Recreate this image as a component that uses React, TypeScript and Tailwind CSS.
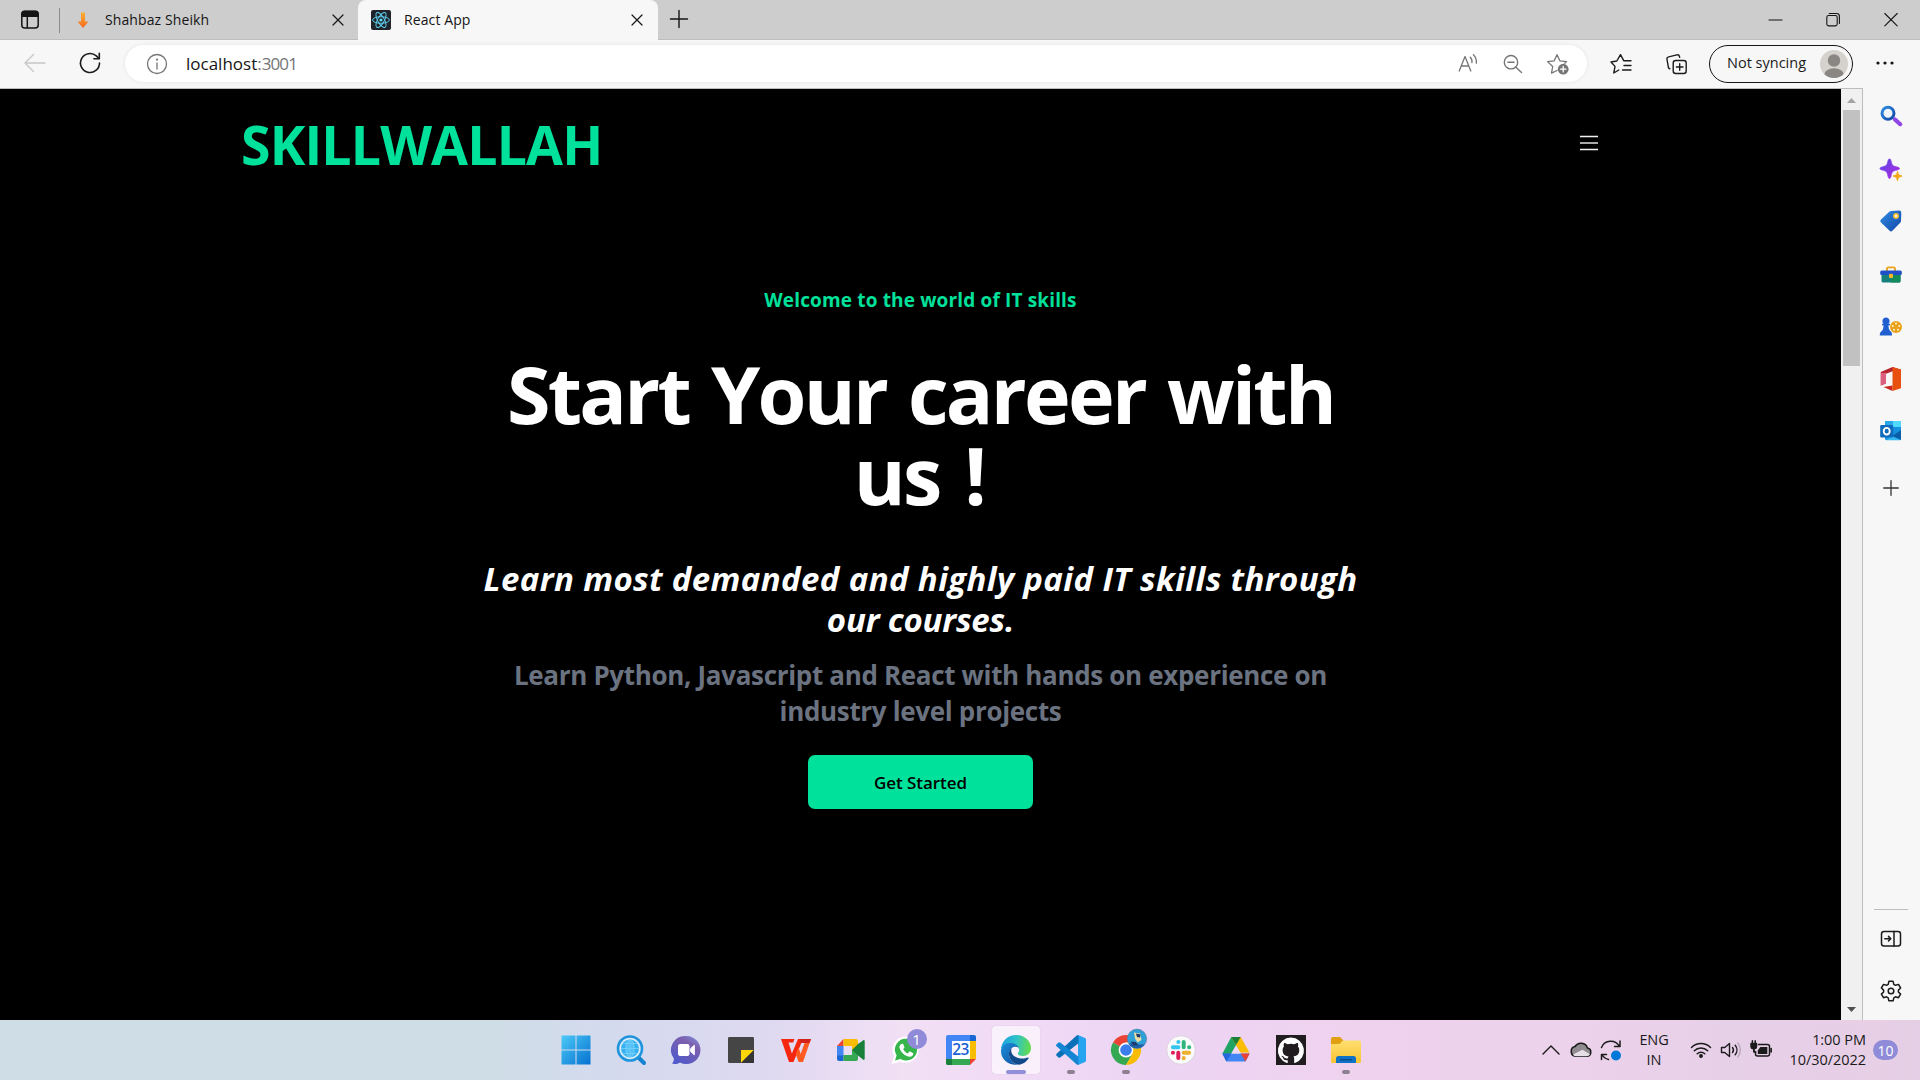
import React from "react";

type Kids = { children: React.ReactNode };

/* 24px line icon on a 24 unit grid */
const Line = ({ children, className = "", w = 1.3 }: Kids & { className?: string; w?: number }) => (
  <svg viewBox="0 0 24 24" className={`size-6 shrink-0 ${className}`} fill="none" stroke="currentColor" strokeWidth={w} strokeLinecap="round" strokeLinejoin="round">
    {children}
  </svg>
);

/* 30px colour icon on a 30 unit grid */
const Art = ({ children }: Kids) => (
  <svg viewBox="0 0 30 30" className="size-[30px] shrink-0 overflow-visible">
    {children}
  </svg>
);

const CloseX = ({ className = "" }: { className?: string }) => (
  <Line className={className} w={1.2}>
    <path d="M7 7l10 10M17 7L7 17" />
  </Line>
);

function TabBar() {
  return (
    <div className="flex h-10 shrink-0 border-b border-[#bdbdbd] bg-[#cdcdcd] text-[14px] text-[#151515]">
      <div className="flex w-[59px] items-center border-0 pl-[18px]">
        <Line w={1.5}>
          <rect x="3.8" y="3.6" width="16.4" height="16.4" rx="3" />
          <path d="M4 5.5a2.4 2.4 0 0 1 2.4-2.2h11.2A2.4 2.4 0 0 1 20 5.5v2.7H4z" fill="currentColor" />
          <path d="M9.3 8v11.8" />
        </Line>
      </div>
      <div className="mt-2 h-[25px] w-px bg-[#8b8b8b]" />
      <div className="flex h-10 w-[298px] items-center">
        <svg viewBox="0 0 14 20" className="ml-4 h-5 w-[14px]">
          <defs>
            <linearGradient id="arr" x1="0" y1="0" x2="0" y2="1">
              <stop offset="0" stopColor="#fbb034" />
              <stop offset="1" stopColor="#f26a1b" />
            </linearGradient>
          </defs>
          <path d="M5 2.500h4v9h3.500L7 18 1.500 11.500H5z" fill="url(#arr)" />
        </svg>
        <span className="ml-[15px] pb-[2px] tracking-[0.100px]">Shahbaz Sheikh</span>
        <CloseX className="mr-2 ml-auto" />
      </div>
      <div className="flex h-10 w-[300px] items-center rounded-t-[8px] bg-[#f7f7f7]">
        <svg viewBox="0 0 20 20" className="ml-[13px] size-5">
          <rect width="20" height="20" rx="2" fill="#20232a" />
          <g fill="none" stroke="#61dafb" strokeWidth="0.9">
            <ellipse cx="10" cy="10" rx="8.400" ry="3.300" />
            <ellipse cx="10" cy="10" rx="8.400" ry="3.300" transform="rotate(60 10 10)" />
            <ellipse cx="10" cy="10" rx="8.400" ry="3.300" transform="rotate(120 10 10)" />
          </g>
          <circle cx="10" cy="10" r="1.600" fill="#61dafb" />
        </svg>
        <span className="ml-[13px] pb-[2px] tracking-[0.1px]">React App</span>
        <CloseX className="mr-[9px] ml-auto" />
      </div>
      <Line className="mt-[7px] ml-[9px]" w={1.4}>
        <path d="M3.500 12h17M12 3.500v17" />
      </Line>
      <div className="ml-auto flex items-center gap-[34px] pr-[17px]">
        <Line w={1.1}>
          <path d="M6 12h13" />
        </Line>
        <Line w={1.1}>
          <rect x="5.800" y="7.500" width="10.400" height="10.400" rx="1.800" />
          <path d="M8.200 5.500h7.600a2.600 2.600 0 0 1 2.600 2.600v7.400" />
        </Line>
        <Line w={1.1}>
          <path d="M5.800 5.500l12.400 12.400M18.200 5.500L5.800 17.900" />
        </Line>
      </div>
    </div>
  );
}

function Toolbar() {
  return (
    <div className="flex h-12 shrink-0 items-center bg-[#f7f7f7] pb-[2px] text-[#1b1b1b]">
      <Line className="ml-[23px] text-[#c6c6c6]">
        <path d="M22 12H2.500M10.500 3.500L2 12l8.500 8.500" />
      </Line>
      <Line className="ml-[31px]" w={1.6}>
        <path d="M21.500 12a9.500 9.500 0 1 1-3.200-7.100L21 7.500" />
        <path d="M21.300 2.300v5.400h-5.400" />
      </Line>
      <div className="mt-px ml-[23px] flex h-[37px] w-[1462px] items-center rounded-full bg-white text-[#757575] shadow-[0_0_4px_rgba(0,0,0,0.08)]">
        <Line className="ml-[20px]">
          <circle cx="12" cy="12" r="9.500" />
          <path d="M12 11v6" />
          <circle cx="12" cy="7.600" r="0.500" fill="currentColor" />
        </Line>
        <span className="ml-[17px] text-[17px]">
          <span className="text-[#151515]">localhost</span>:<span className="tracking-[-0.900px]">3001</span>
        </span>
        <Line className="ml-auto">
          <path d="M3.200 19L9 4.500 14.800 19M5.200 14h7.600" />
          <path d="M14.200 5.200a6 6 0 0 1 1.700 5.500M17.400 2.700a10 10 0 0 1 2.900 8.500" />
        </Line>
        <Line className="ml-[21px]" w={1.4}>
          <circle cx="10" cy="10.200" r="6.700" />
          <path d="M15 15.200l5.500 5.300M6.900 10.200h6.200" />
        </Line>
        <Line className="mr-[17px] ml-[21px]" w={1.3}>
          <path d="M11 18.500l-5.500 2.600 1.200-6.600L1.500 9.600l6.700-.8L11 2.700l2.900 6.100 6.600.8-1.700 1.700" />
          <circle cx="17.200" cy="17.200" r="5.400" fill="currentColor" stroke="none" />
          <path d="M17.200 14.500v5.400M14.500 17.200h5.400" stroke="white" />
        </Line>
      </div>
      <Line className="mt-px ml-[22px]" w={1.4}>
        <path d="M9.800 18l-5 3 1.200-6.600L2 10l5.800-1 3.700-6.300 3.200 6h7.300M15 13.500h7M13.500 18h8.500" />
      </Line>
      <Line className="mt-px ml-[32px]" w={1.4}>
        <rect x="8.200" y="8.500" width="13" height="13" rx="2.500" />
        <path d="M14.700 11.700v6.600M11.400 15h6.600M4.800 16.800L3.500 15.900 2 7.500a2.200 2.200 0 0 1 1.700-2.600l8.200-2a2.200 2.200 0 0 1 2.600 1.700l.2.800" />
      </Line>
      <div className="mt-px ml-[20px] flex h-[38px] w-[144px] items-center justify-between rounded-full border-[1.5px] border-[#151515] pr-1 pl-[17px] text-[14.500px]">
        <span className="pb-px">Not syncing</span>
        <svg viewBox="0 0 28 28" className="size-7">
          <defs>
            <clipPath id="av">
              <circle cx="14" cy="14" r="14" />
            </clipPath>
          </defs>
          <g clipPath="url(#av)">
            <rect width="28" height="28" fill="#d5d2ce" />
            <circle cx="14" cy="10.500" r="6.200" fill="#8a8683" />
            <ellipse cx="14" cy="25" rx="10" ry="6.700" fill="#8a8683" />
          </g>
        </svg>
      </div>
      <svg viewBox="0 0 18 4" className="ml-[23px] h-1 w-[18px] fill-[#151515]">
        <circle cx="2" cy="2" r="1.600" />
        <circle cx="9" cy="2" r="1.600" />
        <circle cx="16" cy="2" r="1.600" />
      </svg>
    </div>
  );
}

function Page() {
  return (
    <main className="flex w-[1841px] flex-col items-center bg-black text-center font-bold text-white">
      <header className="flex h-[110px] w-full items-center justify-between pr-[243px] pl-[241px]">
        <div className="mt-[2px] text-[53.600px] leading-[54px] tracking-[-0.850px] text-[#00e29b]">SKILLWALLAH</div>
        <svg viewBox="0 0 18 18" className="-mt-[2px] size-[18px]" fill="none" strokeWidth="1.700">
          <path d="M0 2.500h18M0 15.500h18" stroke="#f2f2f2" />
          <path d="M0 9h18" stroke="#c8c8c8" />
        </svg>
      </header>
      <p className="mt-[87px] text-[19px] leading-7 tracking-[0.150px] text-[#00e29b]">Welcome to the world of IT skills</p>
      <h1 className="mt-[39px] text-[79px] leading-[81px] tracking-[-2.700px] [word-spacing:4px]">
        Start Your career with
        <br />
        <span className="mr-[3px] [word-spacing:7px]">us !</span>
      </h1>
      <h2 className="mt-[43px] text-[33px] leading-[41px] tracking-[0.360px] italic">
        Learn most demanded and highly paid IT skills through
        <br />
        <span className="tracking-[-0.200px]">our courses.</span>
      </h2>
      <p className="mt-[17px] text-[26px] leading-9 tracking-[-0.330px] text-[#6b7280]">
        Learn Python, Javascript and React with hands on experience on
        <br />
        industry level projects
      </p>
      <button className="mt-[26px] h-[54px] w-[225px] rounded-[7px] bg-[#00e29b] pt-px text-[17px] font-semibold tracking-[-0.050px] text-black">
        Get Started
      </button>
    </main>
  );
}

function Scrollbar() {
  return (
    <div className="flex w-[21px] flex-col items-center bg-[#f0f0f0]">
      <svg viewBox="0 0 21 21" className="size-[21px] shrink-0">
        <path d="M6 14l4.500-5 4.500 5z" fill="#a3a3a3" />
      </svg>
      <div className="h-[256px] w-[17px] bg-[#c1c1c1]" />
      <svg viewBox="0 0 21 21" className="mt-auto size-[21px] shrink-0">
        <path d="M6 8l4.500 5 4.500-5z" fill="#505050" />
      </svg>
    </div>
  );
}

const Side = ({ children, className }: Kids & { className: string }) => (
  <svg viewBox="0 0 24 24" className={`size-6 shrink-0 ${className}`}>
    {children}
  </svg>
);

function Sidebar() {
  return (
    <aside className="flex flex-1 flex-col items-center border-l border-[#bdbdbd] bg-[#f7f7f7] pr-px">
      <Side className="mt-[16px]">
        <defs>
          <linearGradient id="bl" x1="0" y1="0" x2="1" y2="1">
            <stop offset="0" stopColor="#2f8de4" />
            <stop offset="1" stopColor="#1246a6" />
          </linearGradient>
          <linearGradient id="pu" x1="0" y1="0" x2="1" y2="1">
            <stop offset="0" stopColor="#5a45e8" />
            <stop offset="1" stopColor="#b32be0" />
          </linearGradient>
        </defs>
        <path d="M16 15.500l5.200 4.700" stroke="#8f46e5" strokeWidth="4.200" strokeLinecap="round" />
        <circle cx="9" cy="9.200" r="6" fill="#eef5fb" stroke="url(#bl)" strokeWidth="3" />
      </Side>
      <Side className="mt-[30px]">
        <path d="M10.500 1c.9 0 1.200.7 1.500 2 1 4.300 1.500 4.900 6 6 1.500.4 2.500.7 2.500 1.500s-1 1.100-2.500 1.500c-4.500 1-5 1.700-6 6-.3 1.300-.6 2.500-1.500 2.500S9.300 19.300 9 18c-1-4.300-1.500-5-5.800-6-1.300-.3-2.200-.7-2.200-1.500S1.900 9.400 3.200 9C7.500 7.900 8 7.300 9 3c.3-1.300.6-2 1.500-2z" fill="url(#pu)" stroke="url(#pu)" strokeWidth="0.800" />
        <path d="M18.500 13.500c.9 3.500 1.100 3.700 4.500 4.600-3.400.9-3.600 1.100-4.500 4.600-.9-3.500-1.100-3.700-4.500-4.600 3.400-.9 3.600-1.100 4.500-4.600z" fill="#f3a712" stroke="#f3a712" />
      </Side>
      <Side className="mt-[27px]">
        <path d="M12.500 2L20 1.500a2.200 2.200 0 0 1 2.300 2.300L22 12a3 3 0 0 1-.8 1.700l-7.600 7.900a2.200 2.200 0 0 1-3.200 0L2 13.500a2 2 0 0 1 0-3l8.300-7.700A3.600 3.600 0 0 1 12.500 2z" fill="url(#bl)" />
        <circle cx="17" cy="7" r="2.200" fill="#fff6d8" stroke="#f5b82e" strokeWidth="1.600" />
      </Side>
      <Side className="mt-[30px]">
        <path d="M8 8V6a1.600 1.600 0 0 1 1.600-1.600h4.800A1.600 1.600 0 0 1 16 6v2" fill="none" stroke="#eaa41b" strokeWidth="1.900" />
        <path d="M2.500 11h19v7a1.500 1.500 0 0 1-1.500 1.500H4A1.500 1.500 0 0 1 2.500 18z" fill="#16807c" />
        <path d="M12 11h9.500v7a1.500 1.500 0 0 1-1.500 1.500h-8z" fill="#128a5a" />
        <rect x="1.200" y="7.500" width="21.600" height="4.600" rx="1.500" fill="#1f50c8" />
        <rect x="10" y="10.800" width="4" height="4.200" rx="0.900" fill="#f7b52c" />
      </Side>
      <Side className="mt-[28px]">
        <circle cx="17" cy="12" r="6" fill="#eaa21c" />
        <g fill="#fff2c8">
          <circle cx="17" cy="8.600" r="1" />
          <circle cx="20.300" cy="11" r="1" />
          <circle cx="19" cy="14.700" r="1" />
          <circle cx="15" cy="14.700" r="1" />
          <circle cx="13.700" cy="11" r="1" />
        </g>
        <path d="M7 2.500a3.600 3.600 0 0 1 2.500 6.200H11v1.600H9.500c0 3.500.7 5 2.500 6.500.9.800 1 2 1 3.700H.8c0-1.700.1-2.900 1.200-3.700 1.900-1.500 2.500-3 2.500-6.500H3V8.700h1.500A3.600 3.600 0 0 1 7 2.500z" fill="#1f5fd0" />
      </Side>
      <Side className="mt-[28px]">
        <path d="M13.500 0L22 2.500v2L13.500 4.200 7 6.800v9.700L1.800 18.500V5z" fill="#b5232d" />
        <path d="M1.800 6L7 5.800v10.700l-5.200 2z" fill="#dc5f80" />
        <path d="M13.500 18.500V24L4.500 20z" fill="#c9241f" />
        <path d="M13.500 0L22 2.700v18.600L13.500 24z" fill="#e8500f" />
      </Side>
      <Side className="mt-[28px]">
        <rect x="6" y="2" width="16" height="19" rx="1.200" fill="#1490df" />
        <path d="M14 2h8v6h-8z" fill="#50d9ff" />
        <path d="M6 2h8v6H6z" fill="#28a8ea" />
        <path d="M22 11v9a1.300 1.300 0 0 1-1.300 1.300H7z" fill="#35b8f1" />
        <path d="M22 11l-9 6 9 4z" fill="#0a5ea8" />
        <rect x="1.200" y="6" width="13" height="12.500" rx="1.200" fill="#0f6cbd" />
        <ellipse cx="7.700" cy="12.200" rx="3" ry="3.300" fill="none" stroke="#fff" strokeWidth="1.900" />
      </Side>
      <Line className="mt-[33px] text-[#333]" w={1.3}>
        <path d="M4.700 12h14.600M12 4.700v14.600" />
      </Line>
      <div className="mt-auto h-px w-[34px] bg-[#bdbdbd]" />
      <Line className="mt-[17px] text-[#1b1b1b]" w={1.5}>
        <rect x="2.500" y="4.500" width="19" height="14.500" rx="2.500" />
        <path d="M15 4.500v14.500M5.800 11.700h6M9.500 9.400l2.300 2.300-2.300 2.300" />
      </Line>
      <Line className="mt-[28px] mb-[17px] text-[#1b1b1b]" w={1.5}>
        <circle cx="12" cy="12" r="2.800" />
        <path d="M9.900 2.300h4.200l.7 3 1.700 1 3-.9 2.100 3.600-2.200 2.100v1.900l2.200 2.100-2.100 3.600-3-.9-1.700 1-.7 3H9.900l-.7-3-1.700-1-3 .9-2.100-3.600L4.600 13v-1.900L2.400 9l2.100-3.600 3 .9 1.700-1z" />
      </Line>
    </aside>
  );
}

const apps: { icon: React.ReactNode; state?: "active" | "open" }[] = [
  {
    icon: (
      <Art>
        <defs>
          <linearGradient id="win" x1="0" y1="0" x2="1" y2="1">
            <stop offset="0" stopColor="#4cc9f8" />
            <stop offset="1" stopColor="#0571d0" />
          </linearGradient>
        </defs>
        <path d="M.5.500h14v14H.500zM15.500.500h14v14h-14zM.5 15.500h14v14H.500zM15.500 15.500h14v14h-14z" fill="url(#win)" />
      </Art>
    ),
  },
  {
    icon: (
      <Art>
        <path d="M22 22l6 6" stroke="#1583d2" strokeWidth="4" strokeLinecap="round" />
        <circle cx="14" cy="13.500" r="12" fill="#d5ecf8" stroke="#1f93dc" strokeWidth="2.600" />
        <circle cx="14" cy="13.500" r="9" fill="#36b0f0" />
        <path d="M14 4.500v18M5 13.500h18M7 8.500h14M7 18.500h14" stroke="#8fdcff" strokeWidth="0.600" />
        <ellipse cx="14" cy="13.500" rx="4.200" ry="9" fill="#6fd0fb" fillOpacity="0.500" stroke="#8fdcff" strokeWidth="0.600" />
      </Art>
    ),
  },
  {
    icon: (
      <Art>
        <defs>
          <linearGradient id="chat" x1="1" y1="0" x2="0.300" y2="1">
            <stop offset="0" stopColor="#7d9be8" />
            <stop offset="0.350" stopColor="#7d5fae" />
            <stop offset="1" stopColor="#5059c9" />
          </linearGradient>
        </defs>
        <path d="M15.500 1a14 14 0 1 1-6.500 26.400C6.500 29 3.500 29.200 1 28.600c1.300-1.600 2-3 1.900-5.200A14 14 0 0 1 15.500 1z" fill="url(#chat)" />
        <rect x="7" y="9" width="11.500" height="12" rx="2.200" fill="#fff" />
        <path d="M19.700 13.500l3.600-3.200v9.500l-3.600-3.200z" fill="#fff" stroke="#fff" strokeLinejoin="round" />
      </Art>
    ),
  },
  {
    icon: (
      <Art>
        <rect x="2" y="2" width="26" height="26" rx="1.200" fill="#454545" />
        <path d="M15 28V15h13z" fill="#ffd60a" />
        <path d="M28 15v13H15z" fill="#353535" />
      </Art>
    ),
  },
  {
    icon: (
      <Art>
        <path d="M0 4h13.500l-1.300 3.500H7.500l3.400 11L17 4h5l-9.500 23H8z" fill="#f5270f" />
        <path d="M25 4h5l-8 23h-4.500l-2.700-8 2.800-7 2 7z" fill="#ff5a1f" />
        <path d="M18.500 4H30l-1.400 4h-8.800z" fill="#d2231a" />
      </Art>
    ),
  },
  {
    icon: (
      <Art>
        <path d="M7.500 4v7H1z" fill="#ea4335" />
        <path d="M1 11h6.500v10H1z" fill="#4285f4" />
        <path d="M1 20.500h6.500V26H3a2 2 0 0 1-2-2z" fill="#1967d2" />
        <path d="M7.500 4H20a2 2 0 0 1 2 2v6l-6 4v-5H7.500z" fill="#fbbc04" />
        <path d="M7.500 20H16v-5l6-3v12a2 2 0 0 1-2 2H7.500z" fill="#34a853" />
        <path d="M16 15l6-6 5-3.600c.9-.7 1.700-.2 1.700.8v17.600c0 1-.9 1.400-1.700.8L22 20.500z" fill="#188038" />
      </Art>
    ),
  },
  {
    icon: (
      <div className="relative">
        <Art>
          <path d="M15.500 1.500A13.200 13.200 0 1 1 9 26.700L.8 28.900l2.300-8A13.200 13.200 0 0 1 15.500 1.500z" fill="#fff" />
          <path d="M15.500 3.800A10.900 10.900 0 1 1 9.500 24L4 25.600l1.600-5.200a10.900 10.900 0 0 1 9.900-16.600z" fill="#35b54a" />
          <path d="M11.300 8.700c.5 0 .8.100 1 .6l1.100 2.600c.2.400 0 .8-.3 1.200l-.9 1.100c1 2 2.600 3.300 4.600 4.200l1.400-1.600c.3-.4.600-.4 1-.2l2.600 1.300c.4.200.6.400.5.900-.2 1.900-1.600 3-3.400 3-4.700-.3-9.700-4.700-10.500-9.500-.1-1.500 1-3.300 2.900-3.600z" fill="#fff" />
        </Art>
        <div className="absolute -top-[6px] left-[16px] flex size-5 items-center justify-center rounded-full bg-[#8f8bd8] text-[15px] text-white">1</div>
      </div>
    ),
  },
  {
    icon: (
      <div className="relative">
        <Art>
          <path d="M2 0h22v6H6v18H0V2a2 2 0 0 1 2-2z" fill="#4285f4" />
          <path d="M24 0h4a2 2 0 0 1 2 2v4h-6z" fill="#1967d2" />
          <path d="M24 6h6v18h-6z" fill="#fbbc04" />
          <path d="M0 24h24v6H2a2 2 0 0 1-2-2z" fill="#34a853" />
          <path d="M24 24h6l-6 6z" fill="#ea4335" />
          <path d="M0 24h6v6H2a2 2 0 0 1-2-2z" fill="#188038" />
          <path d="M6 6h18v18H6z" fill="#fff" />
        </Art>
        <div className="absolute inset-0 flex items-center justify-center text-[15.500px] font-semibold tracking-[-0.600px] text-[#1a62d6]">23</div>
      </div>
    ),
  },
  {
    state: "active",
    icon: (
      <Art>
        <defs>
          <linearGradient id="e1" x1="0" y1="0.300" x2="1" y2="0.400">
            <stop offset="0" stopColor="#1ba0e0" />
            <stop offset="0.500" stopColor="#2fc2c9" />
            <stop offset="1" stopColor="#63dd4c" />
          </linearGradient>
          <linearGradient id="e2" x1="0" y1="0" x2="1" y2="1">
            <stop offset="0" stopColor="#1b8fdc" />
            <stop offset="1" stopColor="#0f4f9e" />
          </linearGradient>
        </defs>
        <path d="M0 14.500C.4 6 7 0 15.200 0 24 0 30 6.500 30 13c0 4.800-3.600 8-8 8-3.400 0-5.200-1.300-5.200-2.300 0-.8 1.400-1.500 1.400-3.700 0-3.200-3-6-7.200-6C5.500 9 1.500 11 0 14.500z" fill="url(#e1)" />
        <path d="M0 15.500C.5 10.500 5 7.500 10.500 8c5 .5 7.700 4 7.700 7 0-2-1.800-3.600-4.200-3.300-4 .5-6.500 4-6 8.300.5 5 4.500 9 9 9.700C7 30.800-.5 24 0 15.500z" fill="url(#e2)" />
        <path d="M10.500 12.900C8.500 14.500 7.700 17 8 20c.6 5.500 5.500 9.800 10.500 9.700 4-.8 7.200-3.200 9-6.200.4-.8-.2-1.300-1-.9-4.500 2-14 1-16-5-.4-1.500-.3-3.300 0-4.700z" fill="#114a8b" />
      </Art>
    ),
  },
  {
    state: "open",
    icon: (
      <Art>
        <path d="M22 0l7 3a1.500 1.500 0 0 1 1 1.400v21.200a1.500 1.500 0 0 1-1 1.400l-7 3z" fill="#27a4ef" />
        <path d="M22.500.2v8L4.200 22.400a1.400 1.400 0 0 1-1.700 0L.6 20.700a1.300 1.300 0 0 1 0-1.900L21 .3z" fill="#0a70b8" />
        <path d="M22.500 29.800v-8L4.200 7.600a1.400 1.400 0 0 0-1.700 0L.6 9.300a1.300 1.300 0 0 0 0 1.900L21 29.700z" fill="#1485d2" />
      </Art>
    ),
  },
  {
    state: "open",
    icon: (
      <Art>
        <path d="M15 15L2 7.500A15 15 0 0 1 28 7.500H15z" fill="#ea4335" />
        <path d="M15 15L2 7.500A15 15 0 0 0 15 30l6.500-11.300z" fill="#34a853" />
        <path d="M15 7.500h13A15 15 0 0 1 15 30l6.500-11.300z" fill="#fbbc04" />
        <circle cx="15" cy="15" r="7.400" fill="#fff" />
        <circle cx="15" cy="15" r="5.800" fill="#3b7ded" />
        <circle cx="26" cy="3.800" r="9.700" fill="#2f9fd8" stroke="#5d7f9c" strokeWidth="0.600" />
        <path d="M17.500 8.500c3 .3 5-1.500 9 .5 2 1 5 .5 7.500 0a9.700 9.700 0 0 1-16.500-.5z" fill="#1f5fa8" />
        <path d="M23-2.500l6 1 1.500 6.500-4 2.500-2.500-4z" fill="#e9dca4" />
        <path d="M25-1.500l4.500 1-.5 3-3-.5zM19.500 6.500l5 .5 3 3-5 .5z" fill="#1a3a6c" />
      </Art>
    ),
  },
  {
    icon: (
      <Art>
        <circle cx="15" cy="15" r="14.300" fill="#fbfbfb" stroke="#ddd3de" />
        <g strokeWidth="4" strokeLinecap="round" fill="none">
          <path d="M6.800 12.300h5.600M12.300 6.900h.1" stroke="#36c5f0" />
          <path d="M17.700 6.900v5.400M23.100 12.300h.1" stroke="#2eb67d" />
          <path d="M17.700 17.700h5.400M17.700 23.100v.1" stroke="#ecb22e" />
          <path d="M12.300 17.700v5.400M6.900 17.700h.1" stroke="#e01e5a" />
        </g>
      </Art>
    ),
  },
  {
    icon: (
      <Art>
        <path d="M10.300 2h9.400L15 10.200 6 26H5L1.500 18.500z" fill="#1fa463" />
        <path d="M10.300 2h9.400l8.800 15.500h-9.200z" fill="#fbbc04" />
        <path d="M10.300 2h9.400L15 10z" fill="#188038" />
        <path d="M1.400 18.500h27.200L24.500 26.500H5.500z" fill="#4285f4" />
        <path d="M1.400 18.500h8.900L5.500 26.500z" fill="#2566dc" />
        <path d="M19.700 18.500h8.900l-4.100 8z" fill="#ea4335" />
        <path d="M15 10.500l4.600 8h-9.200z" fill="#efd9f3" />
      </Art>
    ),
  },
  {
    icon: (
      <Art>
        <rect width="30" height="30" fill="#201c20" />
        <path transform="translate(1.900 2.200) scale(1.090)" fill="#fff" d="M12 .3a12 12 0 0 0-3.800 23.380c.6.120.830-.260.830-.570L9 21.070c-3.340.720-4.040-1.610-4.040-1.610-.550-1.390-1.340-1.760-1.340-1.760-1.080-.740.090-.730.090-.730 1.200.090 1.830 1.240 1.830 1.240 1.080 1.830 2.810 1.300 3.500 1 .1-.780.420-1.310.760-1.610-2.670-.3-5.470-1.330-5.470-5.930 0-1.310.470-2.380 1.240-3.220-.140-.3-.540-1.520.1-3.180 0 0 1-.320 3.300 1.230a11.500 11.500 0 0 1 6 0c2.280-1.550 3.290-1.230 3.290-1.230.640 1.660.240 2.880.120 3.180a4.650 4.650 0 0 1 1.230 3.220c0 4.610-2.800 5.630-5.480 5.920.420.360.810 1.100.810 2.220l-.010 3.290c0 .310.2.690.820.570A12 12 0 0 0 12 .3z" />
      </Art>
    ),
  },
  {
    state: "open",
    icon: (
      <Art>
        <defs>
          <linearGradient id="fo" x1="0" y1="0" x2="0" y2="1">
            <stop offset="0" stopColor="#ffdf70" />
            <stop offset="1" stopColor="#f8c332" />
          </linearGradient>
        </defs>
        <path d="M0 4a2 2 0 0 1 2-2h7l3.500 3.500L9 12H0z" fill="#e0a011" />
        <path d="M12 5.500h16.500A1.500 1.500 0 0 1 30 7v19.500a1.500 1.500 0 0 1-1.500 1.500h-27A1.500 1.500 0 0 1 0 26.500V9h8.500z" fill="url(#fo)" />
        <path d="M5 28v-4.500a2.500 2.500 0 0 1 2.500-2.500h15a2.500 2.500 0 0 1 2.500 2.500V28z" fill="#1072c6" />
        <rect x="9" y="24" width="12" height="1.600" rx="0.800" fill="#0b4c8c" />
      </Art>
    ),
  },
];

function Taskbar() {
  return (
    <footer className="flex h-[60px] shrink-0 items-center bg-[linear-gradient(90deg,#cfdde6_0%,#cfdde7_26%,#d4daee_32%,#ded9f0_40%,#f2e0f5_47%,#f1dbf5_52%,#ecd5f4_60%,#efd2ee_70%,#ecd2ea_82%,#e6d0e8_90%,#e7cfe6_98%,#e3cfe5_100%)] pl-[548px] text-[#1b1b1b]">
      {apps.map((a, i) => (
        <div key={i} className="flex w-[55px] justify-center">
          <div className={`relative flex h-12 w-12 items-center justify-center rounded-[4px] ${a.state === "active" ? "bg-white/60 shadow-[0_0_1px_rgba(0,0,0,0.2)]" : ""}`}>
            {a.icon}
            {a.state === "active" && <div className="absolute bottom-0 h-1 w-5 rounded-full bg-[#928fda]" />}
            {a.state === "open" && <div className="absolute bottom-0 h-1 w-2 rounded-full bg-[#8d8090]" />}
          </div>
        </div>
      ))}
      <div className="ml-auto flex items-center gap-[6px]">
        <Line w={1.4}>
          <path d="M4 16l8-8 8 8" />
        </Line>
        <Line w={1.5}>
          <path d="M6.500 18.300h11a4.200 4.200 0 0 0 1-8.300A7 7 0 0 0 6 8.500a5 5 0 0 0 .5 9.800z" fill="#8f8b8f" />
          <path d="M4 16.500l9.500-4.700 7.500 4.500c-1 1.500-2 1.900-3.500 1.900h-11c-1 0-2-.7-2.500-1.700z" fill="#e6e0e6" stroke="none" />
        </Line>
        <Line w={1.5}>
          <path d="M2.500 9.500a10 10 0 0 1 18-1M21 3v5.500h-5.500M9.500 21.500a10 10 0 0 1-6.500-5M2.500 21.500v-5h5" />
          <circle cx="17" cy="17.500" r="5" fill="#0078d7" stroke="none" />
        </Line>
      </div>
      <div className="ml-[7px] flex w-[48px] flex-col items-center text-[14.500px] leading-5 tracking-[-0.100px]">
        <span>ENG</span>
        <span>IN</span>
      </div>
      <div className="ml-[11px] flex items-center gap-[6px]">
        <Line w={1.5}>
          <path d="M2.500 9.500a13.500 13.500 0 0 1 19 0M5.300 12.700a9.500 9.500 0 0 1 13.400 0M8.200 15.700a5.400 5.400 0 0 1 7.600 0" />
          <circle cx="12" cy="18" r="1.200" fill="currentColor" />
        </Line>
        <Line w={1.400}>
          <path d="M2.500 9.500h3.300L10.500 5.500v13l-4.700-4H2.500zM13.500 9.500a4 4 0 0 1 0 5M16.200 7.200a7.500 7.500 0 0 1 0 9.600" />
          <path d="M18.800 5a11 11 0 0 1 0 14" stroke="#b9a6b8" />
        </Line>
        <Line w={1.5}>
          <path d="M9.500 6.500h9a2 2 0 0 1 2 2V16a2 2 0 0 1-2 2h-10a2 2 0 0 1-2-2v-1.500M22.200 10.500v3.500" />
          <path d="M8.800 16v-3.600l2.500-3.400h7v7z" fill="currentColor" stroke="none" />
          <path d="M2 5.500h5.500v2.500a2.500 2.500 0 0 1-5.500 0zM3.400 2.800v2.500M6.200 2.800v2.500M4.800 10.500v3.500h2" fill="currentColor" />
        </Line>
      </div>
      <div className="ml-[5px] flex w-[88px] flex-col items-end text-[14.500px] leading-5 tracking-[-0.050px]">
        <span>1:00 PM</span>
        <span>10/30/2022</span>
      </div>
      <div className="mr-[22px] ml-[7px] flex h-5 w-[25px] items-center justify-center rounded-full bg-[#8f8bd8] text-[14px] text-white">10</div>
    </footer>
  );
}

export default function App() {
  return (
    <div className="flex h-[1080px] w-[1920px] flex-col overflow-hidden font-['Open_Sans','Noto_Sans',sans-serif]">
      <TabBar />
      <Toolbar />
      <div className="flex min-h-0 flex-1">
        <div className="flex border-t border-[#bdbdbd]">
          <Page />
          <Scrollbar />
        </div>
        <Sidebar />
      </div>
      <Taskbar />
    </div>
  );
}
